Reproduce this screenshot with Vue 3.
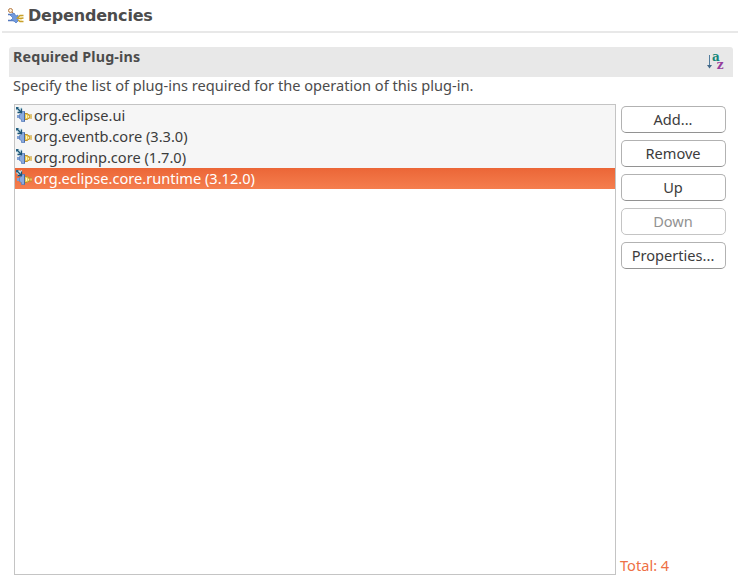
<script setup>
import { ref } from 'vue'

const selected = ref(3)
const plugins = [
  { label: 'org.eclipse.ui' },
  { label: 'org.eventb.core (3.3.0)' },
  { label: 'org.rodinp.core (1.7.0)' },
  { label: 'org.eclipse.core.runtime (3.12.0)' },
]
const actions = [
  { label: 'Add...' },
  { label: 'Remove' },
  { label: 'Up' },
  { label: 'Down', disabled: true },
  { label: 'Properties...' },
]
</script>

<template>
  <main class="editor">
    <header class="heading">
      <svg class="heading-icon" width="16" height="16" viewBox="0 0 16 16">
        <path d="M4 4L7 7" stroke="#a87850" />
        <circle cx="2.5" cy="2.5" r="2" fill="#fff2d8" stroke="#b57a45" />
        <path d="M0 6.5H5M0 12.5H6" stroke="#5579bd" stroke-width="1.3" />
        <path d="M2 7L6 5L8 8L10 7V13L8 15L6 13L3 12L5 10Z" fill="#7199dc" stroke="#5580ca" stroke-width=".8" />
        <path d="M15.5 7.5H12L9.5 10L12 10.5L15.5 10M15.5 13.5H12L10 12" fill="none" stroke="#c8a02b" stroke-width="1.5" />
        <path d="M12 9H14M12 12H14" stroke="#f5dc77" />
      </svg>
      <h1>Dependencies</h1>
    </header>
    <section class="section">
      <div class="section-bar">
        <h2>Required Plug-ins</h2>
        <svg class="sort-icon" width="20" height="22" viewBox="0 0 20 22">
          <path d="M3.5 3V15" stroke="#527d9e" />
          <path d="M1 13H6L3.5 16.5Z" fill="#426889" />
          <text x="6" y="9" class="letter-a">a</text>
          <text x="10.7" y="17" class="letter-z">z</text>
        </svg>
      </div>
      <p class="description">Specify the list of plug-ins required for the operation of this plug-in.</p>
      <div class="content">
        <ul class="plugins">
          <li v-for="(p, i) in plugins" :key="p.label" :class="{ selected: i === selected }" @click="selected = i">
            <svg width="16" height="16" viewBox="0 0 16 16">
              <path d="M1 8H4V11H1Z" fill="#7f9fd2" />
              <path d="M3.5 7.5L5.5 6.5V4.5H8.5V14.5H5.5V12.5L3.5 11.5Z" fill="#8aaade" stroke="#5c80be" stroke-width=".8" />
              <path d="M8.5 4.5V14.5" stroke="#496ba6" />
              <path d="M9 6H11L13 7.5V8.5H13.5V11H13V11.5L11 13H9Z" fill="#edca54" />
              <path d="M9 6.5H11L13 8H16M9 12.5H11L13 11H16M13.5 8V11" fill="none" stroke="#bd902b" />
              <path d="M13.5 9.5H16" stroke="#e4c35c" stroke-width="2" />
              <path d="M10 8H11V11H10ZM12 9H13V10.5H12Z" fill="#fff6c0" />
              <path d="M0 0H3L4 1L6 0V6H1L2 4L0 3Z" fill="#cde6ef" />
              <path d="M1 1L5 5M1.5 5.5H5.5V1.5" fill="none" stroke="#1d5475" stroke-width="1.3" />
              <path d="M0 .5H2.5M.5 0V2.5" stroke="#286384" />
            </svg>
            <span>{{ p.label }}</span>
          </li>
        </ul>
        <aside class="side">
          <button v-for="a in actions" :key="a.label" :disabled="a.disabled" type="button">{{ a.label }}</button>
          <span class="total">Total: {{ plugins.length }}</span>
        </aside>
      </div>
    </section>
  </main>
</template>

<style>
body { background: #fff; }
</style>
<style scoped>
* { box-sizing: border-box; }
.editor {
  width: 738px;
  height: 578px;
  overflow: hidden;
  color: #3c3c3c;
  font: 14.6px/21px "Noto Sans", sans-serif;
}
.heading {
  display: flex;
  height: 33px;
  margin-left: 2px;
  padding: 8px 0 0 6px;
  border-bottom: 2px solid #e8e8e8;
}
.heading-icon { flex: none; }
h1 {
  margin: -2px 0 0 4px;
  color: #4c4c4c;
  font: bold 16px/19px "DejaVu Sans", sans-serif;
  letter-spacing: -0.18px;
}
.section { padding: 14px 5px 0 9px; }
.section-bar {
  display: flex;
  justify-content: space-between;
  height: 30px;
  padding: 0 7px 0 4px;
  border-radius: 3px 3px 0 0;
  background: #e8e8e8;
}
h2 {
  margin: 0;
  color: #4c4c4c;
  font: bold 14.3px/20px "Noto Sans", sans-serif;
  letter-spacing: 0.15px;
}
.sort-icon { margin-top: 5px; overflow: visible; }
.letter-a, .letter-z { font: bold 12px "DejaVu Serif", serif; }
.letter-a { fill: #168779; }
.letter-z { fill: #963d9c; }
.description {
  height: 27px;
  margin: 0;
  padding-left: 4px;
  color: #4c4c4c;
  line-height: 17px;
  white-space: nowrap;
}
.content { display: flex; margin-left: 5px; height: 471px; }
.plugins {
  width: 602px;
  margin: 0;
  padding: 0;
  border: 1px solid #c4c4c4;
  list-style: none;
}
li {
  display: flex;
  height: 21px;
  padding-left: 1px;
  background: #f6f6f6;
  white-space: nowrap;
}
li svg { flex: none; margin: 2px 2px 0 0; }
li.selected {
  color: #fff;
  background: linear-gradient(#eb6637, #f57e4e);
}
.side {
  display: flex;
  flex-direction: column;
  gap: 7px;
  width: 110px;
  padding: 2px 0 0 5px;
}
button {
  flex: none;
  width: 105px;
  height: 27px;
  padding: 0 1px 0 0;
  border: 1px solid #b2b2b2;
  border-bottom-color: #929292;
  border-radius: 5px;
  background: #fff;
  color: #3c3c3c;
  font: inherit;
  line-height: 23px;
}
button:disabled { border-color: #c4c4c4; color: #929292; }
.total { margin: auto 0 -1px -1px; color: #ee7045; }
</style>
